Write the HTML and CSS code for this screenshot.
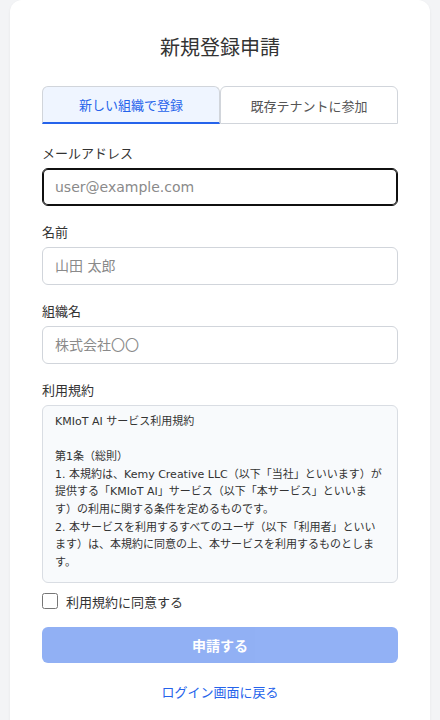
FILE: index.html
```html
<!DOCTYPE html>
<html lang="ja">
<head>
<meta charset="utf-8">
<title>新規登録申請</title>
<link rel="stylesheet" href="styles.css">
</head>
<body>
<main class="card">
  <h1 class="title">新規登録申請</h1>
  <div class="tabs">
    <button class="tab tab-active" type="button">新しい組織で登録</button>
    <button class="tab" type="button">既存テナントに参加</button>
  </div>
  <form class="form">
    <div class="field">
      <label class="label" for="email">メールアドレス</label>
      <input class="input is-focused" id="email" type="email" placeholder="user@example.com">
    </div>
    <div class="field">
      <label class="label" for="name">名前</label>
      <input class="input" id="name" type="text" placeholder="山田 太郎">
    </div>
    <div class="field">
      <label class="label" for="org">組織名</label>
      <input class="input" id="org" type="text" placeholder="株式会社〇〇">
    </div>
    <div class="field field-terms">
      <div class="label">利用規約</div>
      <div class="terms">KMIoT AI サービス利用規約

第1条（総則）
1. 本規約は、Kemy Creative LLC（以下「当社」といいます）が提供する「KMIoT AI」サービス（以下「本サービス」といいます）の利用に関する条件を定めるものです。
2. 本サービスを利用するすべてのユーザ（以下「利用者」といいます）は、本規約に同意の上、本サービスを利用するものとします。</div>
    </div>
    <label class="agree">
      <input class="checkbox" type="checkbox">
      <span>利用規約に同意する</span>
    </label>
    <button class="submit" type="button" disabled>申請する</button>
    <a class="back" href="#">ログイン画面に戻る</a>
  </form>
</main>
</body>
</html>
```

FILE: styles.css
```css
* {
  box-sizing: border-box;
}

html, body {
  margin: 0;
  padding: 0;
}

body {
  background: #f3f4f6;
  font-family: "DejaVu Sans", "Noto Sans CJK JP", sans-serif;
  color: #333;
  padding: 0 10px;
  text-spacing-trim: space-all;
}

.card {
  background: #fff;
  border-radius: 12px;
  padding: 34px 32px 40px;
  box-shadow: 0 1px 3px rgba(0, 0, 0, 0.06);
  min-height: 760px;
}

.title {
  margin: 0 0 24px;
  font-size: 20px;
  line-height: 28px;
  font-weight: 400;
  text-align: center;
  color: #333;
}

.tabs {
  display: flex;
  margin-bottom: 21px;
}

.tab {
  flex: 1;
  height: 38px;
  margin: 0;
  padding: 0;
  background: #fff;
  border: 1px solid #d1d5db;
  border-radius: 6px 6px 0 0;
  font-family: inherit;
  font-size: 13px;
  color: #555;
  cursor: pointer;
  text-spacing-trim: space-all;
}

.tab-active {
  background: #eff5ff;
  color: #2563eb;
  border-bottom: 2px solid #2563eb;
}

.form {
  display: flex;
  flex-direction: column;
}

.field {
  display: flex;
  flex-direction: column;
  margin-bottom: 18px;
}

.field-terms {
  margin-bottom: 8px;
}

.label {
  font-size: 13px;
  line-height: 18px;
  margin-bottom: 5px;
  color: #333;
}

.input {
  height: 38px;
  padding: 0 12px;
  border: 1px solid #d1d5db;
  border-radius: 6px;
  font-family: inherit;
  font-size: 14px;
  color: #333;
  background: #fff;
  outline: none;
}

.input::placeholder {
  color: #8a8a8a;
}

.is-focused {
  border-color: #101010;
  box-shadow: inset 0 0 0 1px #101010;
}

.terms {
  height: 178px;
  overflow: hidden;
  padding: 7px 12px;
  background: #f8fafc;
  border: 1px solid #d9dde3;
  border-radius: 6px;
  font-size: 11px;
  line-height: 1.6;
  color: #333;
  white-space: pre-line;
  text-spacing-trim: space-all;
}

.agree {
  display: flex;
  align-items: center;
  gap: 8px;
  height: 20px;
  font-size: 13px;
  color: #333;
}

.checkbox {
  width: 16px;
  height: 16px;
  margin: 0;
}

.submit {
  margin-top: 16px;
  height: 36px;
  border: none;
  border-radius: 6px;
  background: #2563eb;
  opacity: 0.5;
  color: #fff;
  font-family: inherit;
  font-size: 14px;
  font-weight: 600;
}

.back {
  margin-top: 20px;
  align-self: center;
  font-size: 13px;
  line-height: 20px;
  color: #2563eb;
  text-decoration: none;
}
```
